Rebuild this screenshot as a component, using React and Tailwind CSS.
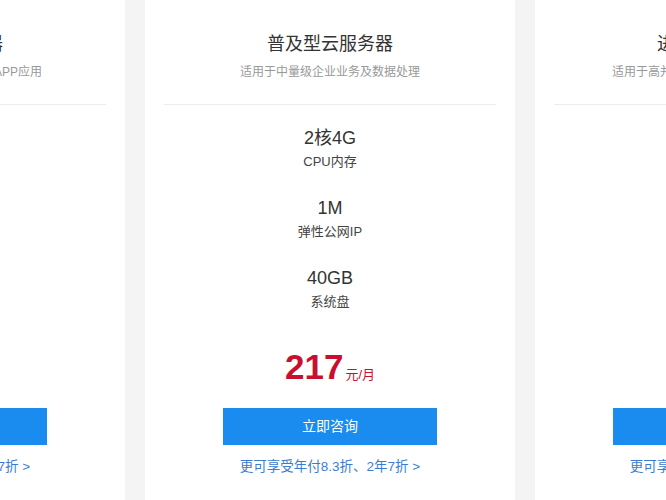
import React from "react";

const cards = [
  {
    title: "入门型云服务器",
    sub: "适用于个人网站、小型博客及APP应用",
    specs: [["1核2G", "CPU内存"], ["1M", "弹性公网IP"], ["40GB", "系统盘"]],
    price: "99",
  },
  {
    title: "普及型云服务器",
    sub: "适用于中量级企业业务及数据处理",
    specs: [["2核4G", "CPU内存"], ["1M", "弹性公网IP"], ["40GB", "系统盘"]],
    price: "217",
  },
  {
    title: "进阶型云服务器",
    sub: "适用于高并发、大流量网站及企业级应用",
    specs: [["4核8G", "CPU内存"], ["2M", "弹性公网IP"], ["40GB", "系统盘"]],
    price: "468",
  },
];

function Card({ c }) {
  return (
    <div className="w-[370px] shrink-0 bg-white px-[19px] pt-[32px] h-[540px] flex flex-col items-center">
      <div className="text-[18px] leading-[24px] text-[#333]">{c.title}</div>
      <div className="mt-[7px] text-[12px] leading-[18px] text-[#999]">{c.sub}</div>
      <div className="mt-[23px] h-px w-full bg-[#ececec]" />
      <div className="mt-[21px] flex flex-col items-center">
        {c.specs.map(([v, l], i) => (
          <div key={i} className={"flex flex-col items-center " + (i > 0 ? "mt-[25px]" : "")}>
            <div className="text-[18px] leading-[24px] text-[#333]">{v}</div>
            <div className="mt-[3px] text-[13px] leading-[18px] text-[#444]">{l}</div>
          </div>
        ))}
      </div>
      <div className="mt-[36px] flex items-baseline h-[40px] leading-[40px] text-[#c8102e]">
        <span className="text-[35px] font-bold">{c.price}</span>
        <span className="ml-[2px] text-[13px]">元/月</span>
      </div>
      <button className="mt-[21px] w-[214px] h-[37px] bg-[#1a8cf0] text-white text-[14px]">立即咨询</button>
      <div className="mt-[13px] text-[13.5px] leading-[18px] text-[#3a7dd0]">更可享受年付8.3折、2年7折 &gt;</div>
    </div>
  );
}

export default function App() {
  return (
    <div
      className="w-[666px] h-[500px] overflow-hidden bg-[#f4f4f4]"
      style={{ fontFamily: '"Liberation Sans", "Noto Sans CJK SC", sans-serif' }}
    >
      <div className="flex gap-5 ml-[-245px]">
        {cards.map((c, i) => (
          <Card key={i} c={c} />
        ))}
      </div>
    </div>
  );
}
